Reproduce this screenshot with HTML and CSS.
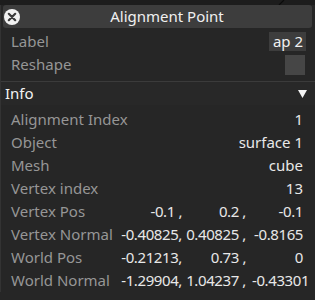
FILE: index.html
```html
<!DOCTYPE html>
<html lang="en">
<head>
    <meta charset="UTF-8">
    <title>Alignment Point</title>
    <link rel="stylesheet" href="styles.css">
</head>
<body>
    <div class="scene">
        <svg width="315" height="5" viewBox="0 0 315 5"><line x1="284" y1="0" x2="279" y2="5" stroke="#0c0c0c" stroke-width="1.2"/></svg>
    </div>
    <div class="window">
        <div class="titlebar">
            <span class="close">
                <svg width="16" height="16" viewBox="0 0 16 16">
                    <circle cx="8" cy="8" r="8" fill="#f2f2f2"/>
                    <path d="M4.8 4.8 L11.2 11.2 M11.2 4.8 L4.8 11.2" stroke="#3c3c3c" stroke-width="2.2" stroke-linecap="round"/>
                </svg>
            </span>
            <span class="title">Alignment Point</span>
        </div>

        <div class="props top">
            <div class="row">
                <span class="label">Label</span>
                <span class="value"><span class="field">ap 2</span></span>
            </div>
            <div class="row">
                <span class="label">Reshape</span>
                <span class="value"><span class="check"></span></span>
            </div>
        </div>

        <div class="section-head">
            <span>Info</span>
            <svg width="9" height="8" viewBox="0 0 9 8"><path d="M0 0 H9 L4.5 8 Z" fill="#f4f4f4"/></svg>
        </div>

        <div class="props info">
            <div class="row"><span class="label">Alignment Index</span><span class="value">1</span></div>
            <div class="row"><span class="label">Object</span><span class="value">surface 1</span></div>
            <div class="row"><span class="label">Mesh</span><span class="value">cube</span></div>
            <div class="row"><span class="label">Vertex index</span><span class="value">13</span></div>
            <div class="row">
                <span class="label">Vertex Pos</span>
                <span class="vec"><span>-0.1 ,</span><span>0.2 ,</span><span>-0.1</span></span>
            </div>
            <div class="row">
                <span class="label">Vertex Normal</span>
                <span class="vec"><span>-0.40825,</span><span>0.40825 ,</span><span>-0.8165</span></span>
            </div>
            <div class="row">
                <span class="label">World Pos</span>
                <span class="vec"><span>-0.21213,</span><span>0.73 ,</span><span>0</span></span>
            </div>
            <div class="row">
                <span class="label">World Normal</span>
                <span class="vec"><span>-1.29904,</span><span>1.04237 ,</span><span>-0.43301</span></span>
            </div>
        </div>
    </div>
</body>
</html>
```

FILE: styles.css
```css
body {
    margin: 0;
    background: #262626;
    font-family: "Noto Sans", "Open Sans", sans-serif;
    font-size: 15px;
    color: #e8e8e8;
    overflow: hidden;
}
.scene {
    height: 5px;
    background: #1d1d1d;
}
.scene svg {
    display: block;
}
.window {
    border-left: 1px solid #333333;
}
.titlebar {
    display: flex;
    align-items: center;
    height: 23px;
    margin: 0 3px 0 2px;
    background: #3d3d3d;
    border-radius: 3px;
}
.close {
    display: flex;
    margin-left: 1px;
    margin-top: 1px;
}
.title {
    flex: 1;
    text-align: center;
    color: #f0f0f0;
    line-height: 23px;
    padding-left: 2px;
}
.props.top {
    padding-top: 2px;
    padding-bottom: 5px;
}
.row {
    display: grid;
    grid-template-columns: 110px 182px;
    align-items: center;
    height: 23px;
    line-height: 23px;
    padding-left: 10px;
    white-space: nowrap;
}
.label {
    color: #969696;
}
.value {
    display: flex;
    justify-content: flex-end;
    align-items: center;
}
.field {
    background: #3d3d3d;
    color: #f0f0f0;
    line-height: 19px;
    height: 19px;
    padding: 0 3px 0 4px;
    margin-right: -3px;
}
.check {
    width: 20px;
    height: 20px;
    background: #464646;
    margin-right: -2px;
}
.section-head {
    display: flex;
    justify-content: space-between;
    align-items: center;
    height: 23px;
    border-top: 1px solid #3b3b3b;
    padding: 0 8px 0 4px;
    color: #f4f4f4;
    line-height: 23px;
    background: #282828;
}
.props.info {
    padding-top: 3px;
}
.vec {
    display: grid;
    grid-template-columns: 61px 64px 57px;
    letter-spacing: -0.4px;
}
.vec span {
    text-align: right;
}
.vec span + span {
    padding-left: 3px;
}
.vec span:last-child {
    padding-left: 6px;
}
```
